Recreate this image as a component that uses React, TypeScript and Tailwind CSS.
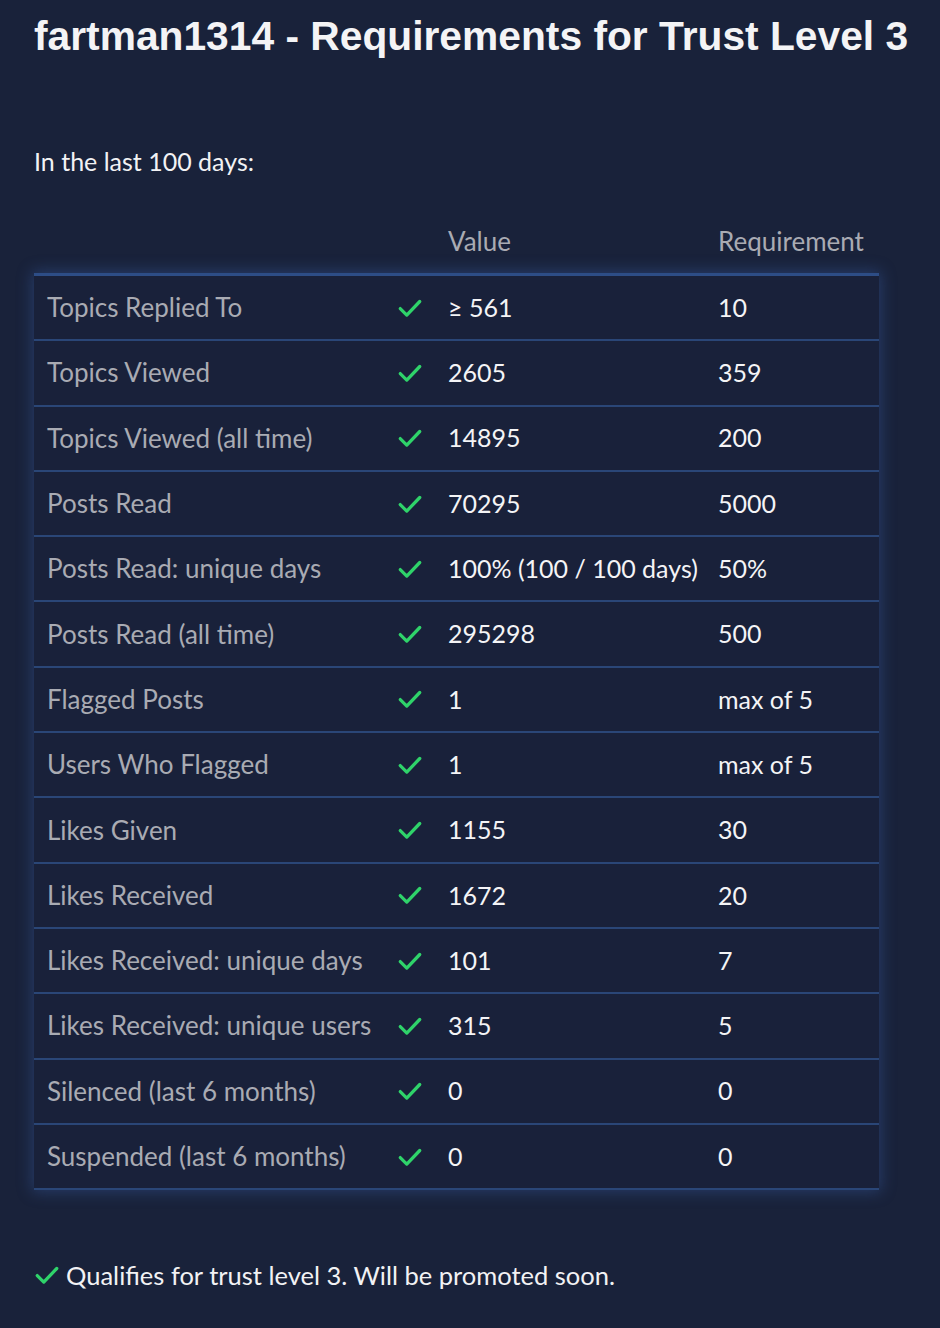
import React from 'react';

type Row = { label: string; value: string; req: string };

const rows: Row[] = [
  { label: 'Topics Replied To', value: '≥ 561', req: '10' },
  { label: 'Topics Viewed', value: '2605', req: '359' },
  { label: 'Topics Viewed (all time)', value: '14895', req: '200' },
  { label: 'Posts Read', value: '70295', req: '5000' },
  { label: 'Posts Read: unique days', value: '100% (100 / 100 days)', req: '50%' },
  { label: 'Posts Read (all time)', value: '295298', req: '500' },
  { label: 'Flagged Posts', value: '1', req: 'max of 5' },
  { label: 'Users Who Flagged', value: '1', req: 'max of 5' },
  { label: 'Likes Given', value: '1155', req: '30' },
  { label: 'Likes Received', value: '1672', req: '20' },
  { label: 'Likes Received: unique days', value: '101', req: '7' },
  { label: 'Likes Received: unique users', value: '315', req: '5' },
  { label: 'Silenced (last 6 months)', value: '0', req: '0' },
  { label: 'Suspended (last 6 months)', value: '0', req: '0' },
];

const Check: React.FC<{ className?: string }> = ({ className }) => (
  <svg className={className} viewBox="0 0 24 24" fill="none" stroke="#2fd36a" strokeWidth="3" strokeLinecap="round" strokeLinejoin="round">
    <path d="M3 12.5l6 6L21 6" />
  </svg>
);

const App: React.FC = () => {
  return (
    <div className="min-h-[1328px] w-[940px] bg-[#19223a] font-['Lato','Noto_Sans',sans-serif] text-white">
      <div className="pl-[34px] pr-[20px] pt-[12px]">
        <h1 className="whitespace-nowrap font-['Liberation_Sans',Arial,sans-serif] text-[40.75px] font-bold leading-[48px] text-[#f4f4f6]">
          fartman1314 - Requirements for Trust Level 3
        </h1>

        <p className="mt-[86px] text-[25px] leading-[30px] text-[#f2f2f4]">In the last 100 days:</p>

        <div className="mt-[46px] flex h-[38px] items-center text-[26px] text-[#a9abb3]">
          <div className="w-[414px]" />
          <div className="w-[270px]">Value</div>
          <div>Requirement</div>
        </div>

        <div className="mt-[13px] w-[845px] border-t-[3px] border-[#2d4d86] shadow-[0_0_14px_2px_rgba(55,90,160,0.45)]">
          {rows.map((r) => (
            <div
              key={r.label}
              className="flex h-[65.3px] items-center border-b-2 border-[#2a4677] bg-[#19213a] text-[25px]"
            >
              <div className="w-[363px] pl-[13px] text-[26px] text-[#a9abb3]">{r.label}</div>
              <div className="flex w-[51px] justify-start">
                <Check className="h-[26px] w-[26px]" />
              </div>
              <div className="w-[270px] text-[#f4f4f6]">{r.value}</div>
              <div className="text-[#f4f4f6]">{r.req}</div>
            </div>
          ))}
        </div>

        <div className="mt-[66px] flex items-center gap-[6px] text-[25.5px] text-[#f2f2f4]">
          <Check className="h-[26px] w-[26px]" />
          <span>Qualifies for trust level 3. Will be promoted soon.</span>
        </div>
      </div>
    </div>
  );
};

export default App;
